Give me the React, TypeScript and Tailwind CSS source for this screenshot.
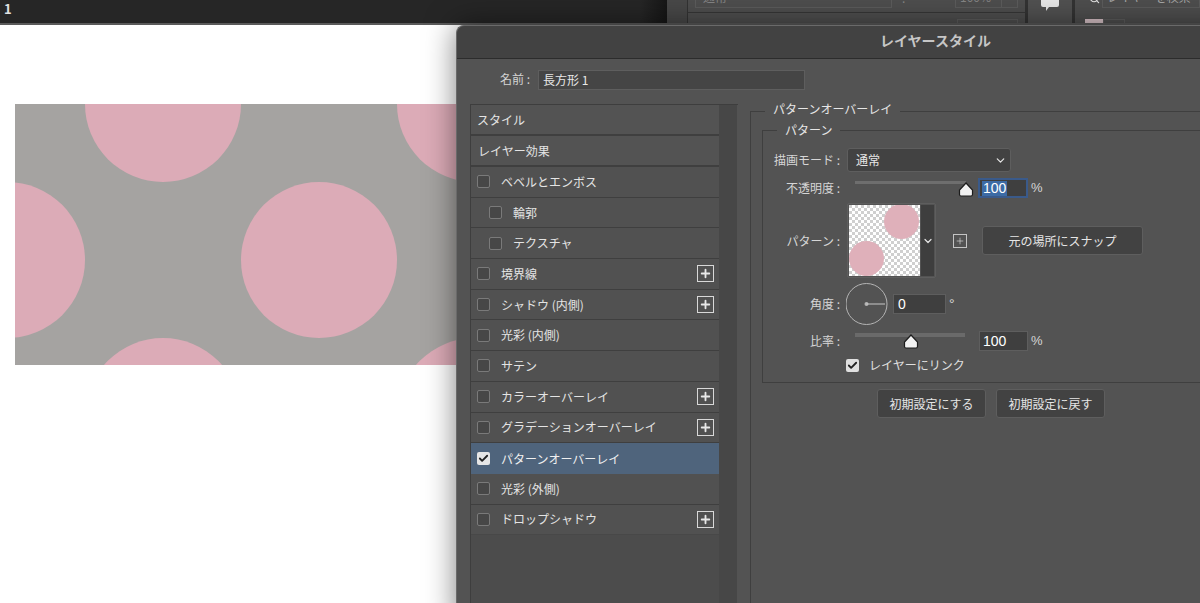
import { ChevronDown, Check, Plus, Search } from "lucide-react";

const effects = [
  { label: "ベベルとエンボス" },
  { label: "輪郭", indent: true },
  { label: "テクスチャ", indent: true },
  { label: "境界線", plus: true },
  { label: "シャドウ (内側)", plus: true },
  { label: "光彩 (内側)" },
  { label: "サテン" },
  { label: "カラーオーバーレイ", plus: true },
  { label: "グラデーションオーバーレイ", plus: true },
  { label: "パターンオーバーレイ", active: true },
  { label: "光彩 (外側)" },
  { label: "ドロップシャドウ", plus: true, last: true },
];

function PlusBox() {
  return (
    <div className="w-[17px] h-[17px] border border-[#d8d8d8] flex items-center justify-center">
      <Plus className="w-[13px] h-[13px] text-[#e8e8e8]" strokeWidth={3.4} />
    </div>
  );
}

function SliderThumb({ left }: { left: string }) {
  return (
    <svg width="16" height="15" viewBox="0 0 16 15" className={left}>
      <path d="M8 1 L14.5 8 V12.5 Q14.5 14 13 14 H3 Q1.5 14 1.5 12.5 V8 Z" fill="#f2f2f2" stroke="#1c1c1c" strokeWidth="1.2" />
    </svg>
  );
}

function Canvas() {
  const dots = [
    [148, 0], [460, 0], [-8, 156], [304, 156], [148, 312], [460, 312],
  ];
  return (
    <svg width="441" height="261" viewBox="0 0 441 261" className="block">
      <rect width="441" height="261" fill="#a5a3a1" />
      {dots.map(([cx, cy], i) => (
        <circle key={i} cx={cx} cy={cy} r="78" fill="#dcabb7" />
      ))}
    </svg>
  );
}

function PatternThumb() {
  return (
    <svg width="71" height="71" viewBox="0 0 71 71" className="block">
      <defs>
        <pattern id="chk" width="6" height="6" patternUnits="userSpaceOnUse">
          <rect width="6" height="6" fill="#ffffff" />
          <rect width="3" height="3" fill="#cfcfcf" />
          <rect x="3" y="3" width="3" height="3" fill="#cfcfcf" />
        </pattern>
      </defs>
      <rect width="71" height="71" fill="url(#chk)" />
      <circle cx="52.5" cy="16.5" r="17.5" fill="#dfb0ba" />
      <circle cx="17.5" cy="53.5" r="17.5" fill="#dfb0ba" />
    </svg>
  );
}

function Row({ label, className, children }: { label: string; className: string; children: React.ReactNode }) {
  return (
    <div className={"flex items-center " + className}>
      <div className="w-[77px] shrink-0 text-right text-[#d6d6d6] whitespace-pre">{label}</div>
      <div className="ml-[7px] flex items-center">{children}</div>
    </div>
  );
}

const latin = { fontFamily: '"Liberation Sans", sans-serif' };

export default function App() {
  return (
    <div
      className="relative w-[1200px] h-[603px] overflow-hidden bg-white text-[#e4e4e4]"
      style={{ fontFamily: '"Noto Sans CJK JP", "Liberation Sans", sans-serif' }}
    >
      {/* app top bar, the panels are cut off by the window edge */}
      <div className="flex h-[25px] bg-[#262626] border-b-2 border-[#5a5a5a] overflow-hidden">
        <div className="w-[640px] shrink-0 pl-[4px] text-[13px] leading-[18px] font-bold text-[#e0e0e0]">1</div>
        <div className="w-[27px] shrink-0 bg-gradient-to-r from-[#262626] to-[#161616]" />
        <div className="w-[21px] shrink-0 bg-[#484848] border-r border-[#333333]" />
        <div className="w-[337px] shrink-0 bg-[#4e4e4e]">
          <div className="h-[13px] border-b border-[#363636] pl-[7px] flex items-start text-[12px] text-[#858585]">
            <div className="w-[197px] h-[8px] border border-t-0 border-[#5c5c5c] pl-[7px] pb-[4px] flex items-end leading-[12px]">通常</div>
            <div className="w-[63px] h-[8px] pl-[10px] pb-[4px] flex items-end leading-[12px]">不透明度 :</div>
            <div className="w-[47px] h-[8px] border border-t-0 border-[#5c5c5c] pl-[4px] pb-[4px] flex items-end leading-[12px]">100%</div>
            <div className="w-[16px] h-[8px] border border-t-0 border-l-0 border-[#5c5c5c]" />
          </div>
          <div className="ml-[269px] mt-[6px] w-[61px] h-[6px] border border-b-0 border-[#5c5c5c]" />
        </div>
        <div className="w-[3px] shrink-0 bg-[#333333]" />
        <div className="w-[44px] shrink-0 bg-[#515151] flex justify-center">
          <svg width="18" height="11" viewBox="0 0 18 11"><path d="M0 0 H18 V5 Q18 7 16 7 H8 L5 11 V7 H2 Q0 7 0 5 Z" fill="#e8e8e8" /></svg>
        </div>
        <div className="w-[3px] shrink-0 bg-[#333333]" />
        <div className="flex-1 bg-[#4e4e4e] pl-[10px]">
          <div className="h-[8px] flex items-end text-[12px] leading-[12px] text-[#a8a8a8]">
            <Search className="w-[11px] h-[11px] ml-[4px] mr-[2px] mb-[4px] text-[#e0e0e0] shrink-0" strokeWidth={2.5} />
            <div className="flex-1 h-[8px] border border-t-0 border-[#5c5c5c] pl-[4px] pb-[4px] flex items-end">レイヤーを検索</div>
          </div>
          <div className="mt-[11px] flex">
            <div className="w-[18px] h-[4px] bg-[#d9c3c8]" />
            <div className="w-[22px] h-[4px] border border-b-0 border-[#5c5c5c]" />
          </div>
        </div>
      </div>

      {/* canvas */}
      <div className="pt-[79px] pl-[15px]">
        <Canvas />
      </div>

      {/* dialog window */}
      <div className="absolute left-[456px] top-[25px] w-[960px] h-[600px] bg-[#535353] rounded-tl-[8px] border-l border-t border-[#6a6a6a] shadow-[0_0_30px_rgba(0,0,0,0.5)]">
        <div className="h-[33px] bg-[#424242] border-b border-[#2c2c2c] rounded-tl-[8px] text-[#c6c6c6] text-[14px] font-bold leading-[29px] pl-[423px]">
          レイヤースタイル
        </div>

        <div className="flex items-start h-[45px] pt-[11px] pl-[43px] text-[12px] leading-[18px]">
          <span className="w-[38px] text-[#d4d4d4]">名前 :</span>
          <div className="w-[267px] h-[20px] bg-[#454545] border border-[#5e5e5e] pl-[4px] text-[#e8e8e8]">長方形 1</div>
        </div>

        <div className="flex pl-[13px]">
          {/* style list */}
          <div className="w-[268px] h-[500px] flex shrink-0 border-l border-t border-[#3e3e3e]">
            <div className="w-[248px] bg-[#4c4c4c] text-[12px]">
              <div className="h-[31px] pl-[6px] border-b-2 border-[#3f3f3f] leading-[29px] bg-[#535353]">スタイル</div>
              <div className="h-[31px] pl-[7px] border-b-2 border-[#3f3f3f] leading-[29px] bg-[#535353]">レイヤー効果</div>
              {effects.map((e) => (
                <div
                  key={e.label}
                  className={
                    e.active
                      ? "h-[30.7px] flex items-center pl-[6px] bg-[#4f647c] text-[#f0f0f0]"
                      : e.last
                        ? "h-[30.7px] flex items-center pl-[6px] pr-[5px] border-b border-[#484848] bg-[#515151]"
                        : "h-[30.7px] flex items-center pl-[6px] pr-[5px] border-b border-[#3f3f3f] bg-[#515151]"
                  }
                >
                  {e.active ? (
                    <div className="w-[13px] h-[13px] rounded-[2px] bg-[#e6e6e6] flex items-center justify-center mr-[11px]">
                      <Check className="w-[11px] h-[11px] text-[#222]" strokeWidth={4} />
                    </div>
                  ) : (
                    <div
                      className={
                        e.indent
                          ? "w-[13px] h-[13px] rounded-[2px] border border-[#7a7a7a] bg-[#474747] ml-[12px] mr-[11px]"
                          : "w-[13px] h-[13px] rounded-[2px] border border-[#7a7a7a] bg-[#474747] mr-[11px]"
                      }
                    />
                  )}
                  <span>{e.label}</span>
                  {e.plus && (
                    <div className="ml-auto">
                      <PlusBox />
                    </div>
                  )}
                </div>
              ))}
            </div>
            <div className="w-[18px] bg-[#474747]" />
          </div>

          {/* pattern overlay settings */}
          <div className="relative ml-[12px] mt-[7px] w-[600px] h-[500px] border-l border-t border-[#3f3f3f] text-[12px] pl-[11px] pt-[18px]">
            <span className="absolute left-[14px] -top-[11px] bg-[#535353] px-[8px] leading-[16px] text-[#e6e6e6]">パターンオーバーレイ</span>

            <div className="relative w-[560px] h-[253px] border-l border-t border-b border-[#3f3f3f] pt-[17px]">
              <span className="absolute left-[14px] -top-[9px] bg-[#535353] px-[8px] leading-[16px] text-[#e6e6e6]">パターン</span>

              <Row label="描画モード :" className="h-[24px]">
                <div className="w-[164px] h-[24px] pl-[8px] pr-[3px] bg-[#424242] border border-[#5e5e5e] rounded-[3px] flex items-center justify-between text-[#e6e6e6]">
                  通常
                  <ChevronDown className="w-[13px] h-[13px] text-[#e6e6e6]" strokeWidth={2.2} />
                </div>
              </Row>

              <Row label="不透明度 :" className="h-[20px] mt-[6px]">
                <div className="relative w-[131px] h-[20px]">
                  <div className="absolute left-[8px] top-[3px] w-[111px] h-[3px] bg-[#6e6e6e]" />
                  <SliderThumb left="absolute left-[111px] top-[4px]" />
                </div>
                <div className="w-[50px] h-[20px] bg-[#3f3f3f] border-2 border-[#3a5a8a] pl-[2px] flex items-center text-[14px] text-white" style={latin}>
                  <span className="bg-[#3c6ba5] leading-[15px] w-[25px] pl-[1px]">100</span>
                </div>
                <span className="ml-[3px] text-[13px] text-[#d6d6d6]" style={latin}>%</span>
              </Row>

              <Row label="パターン :" className="h-[75px] mt-[5px]">
                <div className="flex h-[75px] w-[89px] border border-[#5e5e5e] rounded-[2px] p-[1px]">
                  <PatternThumb />
                  <div className="ml-[1px] flex-1 bg-[#3e3e3e] flex items-center justify-center">
                    <ChevronDown className="w-[12px] h-[12px] text-[#e6e6e6]" strokeWidth={2.4} />
                  </div>
                </div>
                <div className="ml-[17px] w-[14px] h-[14px] border border-[#c4c4c4] flex items-center justify-center">
                  <Plus className="w-[10px] h-[10px] text-[#d8d8d8]" strokeWidth={1.6} />
                </div>
                <div className="ml-[15px] w-[161px] h-[29px] bg-[#424242] border border-[#5e5e5e] rounded-[3px] flex items-center justify-center text-[#e6e6e6]">
                  元の場所にスナップ
                </div>
              </Row>

              <Row label="角度 :" className="h-[42px] mt-[5px]">
                <svg width="44" height="44" viewBox="0 0 44 44" className="block -mx-[1px]">
                  <circle cx="20.5" cy="22" r="20.5" fill="none" stroke="#b4b4b4" strokeWidth="1" />
                  <circle cx="20.5" cy="22" r="2" fill="#b4b4b4" />
                  <line x1="20.5" y1="22" x2="39" y2="22" stroke="#c8c8c8" strokeWidth="1" />
                </svg>
                <div className="ml-[4px] w-[53px] h-[20px] bg-[#3f3f3f] border border-[#5e5e5e] pl-[4px] flex items-center text-[14px] text-white" style={latin}>0</div>
                <span className="ml-[3px] text-[14px] text-[#d6d6d6]" style={latin}>°</span>
              </Row>

              <Row label="比率 :" className="h-[20px] mt-[6px]">
                <div className="relative w-[132px] h-[20px]">
                  <div className="absolute left-[8px] top-[2px] w-[110px] h-[4px] bg-[#6a6a6a]" />
                  <SliderThumb left="absolute left-[56px] top-[3px]" />
                </div>
                <div className="w-[49px] h-[20px] bg-[#3f3f3f] border border-[#5e5e5e] pl-[3px] flex items-center text-[14px] text-white" style={latin}>100</div>
                <span className="ml-[3px] text-[13px] text-[#d6d6d6]" style={latin}>%</span>
              </Row>

              <div className="flex items-center mt-[7px] ml-[83px] h-[14px]">
                <div className="w-[13px] h-[13px] rounded-[2px] bg-[#e0e0e0] flex items-center justify-center">
                  <Check className="w-[11px] h-[11px] text-[#222]" strokeWidth={4} />
                </div>
                <span className="ml-[10px] text-[#e0e0e0]">レイヤーにリンク</span>
              </div>
            </div>

            <div className="flex gap-[10px] ml-[115px] mt-[6px]">
              <div className="w-[109px] h-[29px] bg-[#424242] border border-[#5e5e5e] rounded-[3px] flex items-center justify-center text-[#e6e6e6]">初期設定にする</div>
              <div className="w-[109px] h-[29px] bg-[#424242] border border-[#5e5e5e] rounded-[3px] flex items-center justify-center text-[#e6e6e6]">初期設定に戻す</div>
            </div>
          </div>
        </div>
      </div>
    </div>
  );
}
